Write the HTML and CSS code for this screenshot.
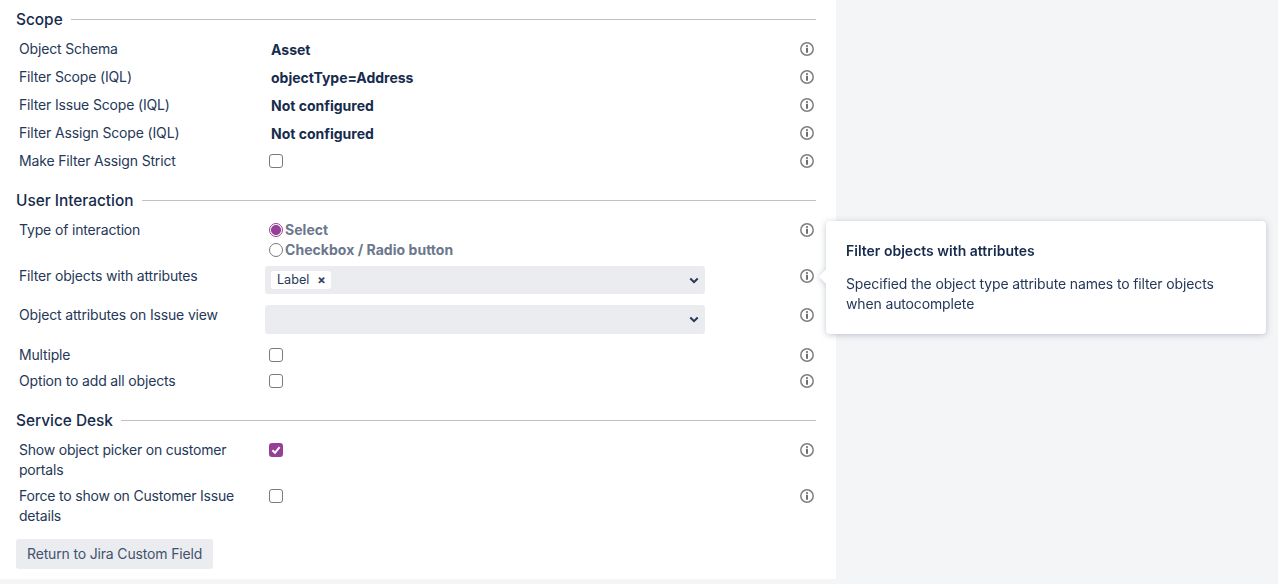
FILE: index.html
```html
<!DOCTYPE html>
<html lang="en">
<head>
<meta charset="utf-8">
<title>Object field configuration</title>
<link rel="stylesheet" href="styles.css">
</head>
<body>
<svg class="defs" width="0" height="0" aria-hidden="true">
  <symbol id="info" viewBox="0 0 14 14">
    <circle cx="7" cy="7" r="6.2" fill="none" stroke="#7f7f7f" stroke-width="1.5"/>
    <circle cx="7" cy="4" r="1.1" fill="#6f6f6f"/>
    <rect x="6" y="5.8" width="2" height="5" rx=".3" fill="#6f6f6f"/>
  </symbol>
  <symbol id="chev" viewBox="0 0 10 7">
    <path d="M1.3 1.5 5 5.2 8.7 1.5" fill="none" stroke="#253858" stroke-width="2"/>
  </symbol>
</svg>
<main class="panel">
  <section class="group">
    <h2 class="heading"><span>Scope</span></h2>
    <div class="row"><label class="label">Object Schema</label><strong class="value">Asset</strong><svg class="info"><use href="#info"/></svg></div>
    <div class="row"><label class="label">Filter Scope (IQL)</label><strong class="value">objectType=Address</strong><svg class="info"><use href="#info"/></svg></div>
    <div class="row"><label class="label">Filter Issue Scope (IQL)</label><strong class="value">Not configured</strong><svg class="info"><use href="#info"/></svg></div>
    <div class="row"><label class="label">Filter Assign Scope (IQL)</label><strong class="value">Not configured</strong><svg class="info"><use href="#info"/></svg></div>
    <div class="row"><label class="label">Make Filter Assign Strict</label><div class="field"><span class="check"></span></div><svg class="info"><use href="#info"/></svg></div>
  </section>
  <section class="group group-ui">
    <h2 class="heading"><span>User Interaction</span></h2>
    <div class="row row-radio"><label class="label">Type of interaction</label>
      <div class="radios">
        <div class="radio-line"><span class="radio radio-on"></span><b>Select</b></div>
        <div class="radio-line"><span class="radio"></span><b>Checkbox / Radio button</b></div>
      </div>
      <svg class="info"><use href="#info"/></svg></div>
    <div class="row row-select"><label class="label">Filter objects with attributes</label>
      <div class="select"><span class="tag">Label<span class="tag-x">×</span></span><svg class="chev"><use href="#chev"/></svg></div>
      <svg class="info"><use href="#info"/></svg></div>
    <div class="row row-select row-select-b"><label class="label">Object attributes on Issue view</label>
      <div class="select"><svg class="chev"><use href="#chev"/></svg></div>
      <svg class="info"><use href="#info"/></svg></div>
    <div class="row row-26"><label class="label">Multiple</label><div class="field"><span class="check"></span></div><svg class="info"><use href="#info"/></svg></div>
    <div class="row row-26"><label class="label">Option to add all objects</label><div class="field"><span class="check"></span></div><svg class="info"><use href="#info"/></svg></div>
  </section>
  <section class="group group-sd">
    <h2 class="heading"><span>Service Desk</span></h2>
    <div class="row row-tall"><label class="label">Show object picker on customer portals</label>
      <div class="field"><span class="check check-on"><svg viewBox="0 0 14 14" width="14" height="14"><path d="M3.4 7.2 6 9.8 10.6 4.2" fill="none" stroke="#fff" stroke-width="2"/></svg></span></div>
      <svg class="info"><use href="#info"/></svg></div>
    <div class="row row-tall"><label class="label">Force to show on Customer Issue details</label><div class="field"><span class="check"></span></div><svg class="info"><use href="#info"/></svg></div>
  </section>
  <button class="btn" type="button">Return to Jira Custom Field</button>
</main>
<aside class="tooltip">
  <h3 class="tip-title">Filter objects with attributes</h3>
  <p class="tip-text">Specified the object type attribute names to filter objects when autocomplete</p>
</aside>
</body>
</html>
```

FILE: styles.css
```css
* { box-sizing: border-box; }
html, body { margin: 0; height: 100%; }
body {
  background: #f4f5f7;
  color: #172b4d;
  font: 14px/20px Inter, "Liberation Sans", sans-serif;
  overflow: hidden;
  position: relative;
}
.defs { position: absolute; }
.panel {
  width: 836px;
  height: 579px;
  background: #fff;
  padding: 9px 20px 0 16px;
}
.heading {
  display: flex;
  align-items: center;
  gap: 8px;
  margin: 0 0 6px;
  font-size: 15.4px;
  font-weight: 500;
  line-height: 20px;
  color: #172b4d;
  height: 20px;
}
.heading span { padding-top: 2px; }
.heading::after {
  content: "";
  flex: 1;
  height: 1px;
  background: #c1c1c1;
}
.group-ui { margin-top: 15px; }
.group-sd { margin-top: 18px; }
.row {
  display: grid;
  grid-template-columns: 250px 1fr 14px;
  align-items: start;
  height: 28px;
  padding: 4px 2px 0 3px;
}
.label { color: #253858; display: block; letter-spacing: -.16px; }
.value { padding: 1px 0 0 2px; font-weight: 700; color: #172b4d; }
.field { padding-top: 3px; }
.info { width: 14px; height: 14px; margin-top: 3px; }
.check {
  display: block;
  width: 14px;
  height: 14px;
  border: 1px solid #7a7a7a;
  border-radius: 3px;
  background: #fff;
}
.check-on { border: 0; background: #963f96; }
.check-on svg { display: block; }
.row-radio { height: 40px; padding-top: 4px; margin-bottom: 10px; }
.radios { color: #6b778c; }
.radios b { font-weight: 700; letter-spacing: .04px; }
.radio-line { display: flex; align-items: center; gap: 2px; height: 20px; }
.radio {
  width: 14px;
  height: 14px;
  border: 1px solid #7a7a7a;
  border-radius: 50%;
  background: #fff;
}
.radio-on {
  border-color: #963f96;
  background: radial-gradient(circle, #963f96 0 4.6px, #fff 5.4px);
}
.row-select { height: 39px; padding-top: 0; grid-template-columns: 246px 440px 1fr 14px; }
.row-select-b { height: 35px; }
.row-select .info { grid-column: 4; }
.select {
  height: 28px;
  background: #ebecf0;
  border-radius: 3px;
  padding: 3px 6px;
  display: flex;
  align-items: flex-start;
  justify-content: space-between;
}
.row-select-b .select { height: 29px; }
.tag {
  height: 18px;
  margin-top: 2px;
  background: #fff;
  border-radius: 3px;
  font-size: 12.6px;
  line-height: 18px;
  padding: 0 5px 0 6px;
  display: flex;
  gap: 8px;
  color: #253858;
}
.tag-x { font-weight: 700; color: #344563; }
.chev { width: 10px; height: 7px; margin: 8px 0 0 auto; }
.row-26 { height: 26px; padding-top: 5px; }
.row-26 .field { padding-top: 3px; }
.row-tall { height: 46px; }
.row-tall .label { padding-right: 14px; letter-spacing: -.2px; }
.btn {
  display: block;
  margin-top: 11px;
  height: 30px;
  padding: 0 11px;
  border: 0;
  border-radius: 3px;
  background: #ebecf0;
  color: #42526e;
  font: inherit;
  letter-spacing: -.16px;
}
.tooltip {
  position: absolute;
  left: 826px;
  top: 221px;
  width: 440px;
  height: 113px;
  background: #fff;
  border-radius: 4px;
  padding: 20px;
  filter: drop-shadow(0 1px 3px rgba(9, 30, 66, .25));
}
.tooltip::before {
  content: "";
  position: absolute;
  left: -5px;
  top: 50px;
  width: 11px;
  height: 11px;
  background: #fff;
  transform: rotate(45deg);
}
.tip-title { margin: 0 0 13px; font-size: 14px; line-height: 20px; font-weight: 600; color: #172b4d; }
.tip-text { margin: 0; color: #253858; letter-spacing: -.135px; }
```
